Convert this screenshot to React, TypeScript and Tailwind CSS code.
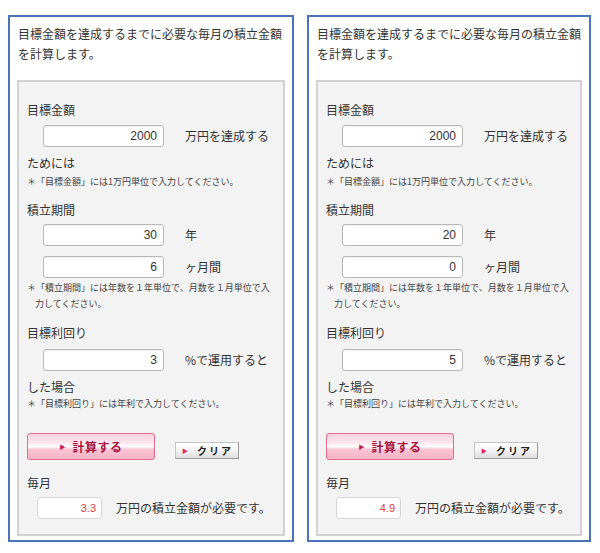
import React from "react";

const jp = { fontFamily: '"Noto Sans CJK JP", "Noto Sans", sans-serif' };
const num = { fontFamily: '"Liberation Sans", Arial, sans-serif' };

function Field({ value, unit }: { value: string; unit: string }) {
  return (
    <div className="flex items-center h-[22px] ml-4">
      <div
        className="w-[121px] h-[22px] bg-white border border-[#b8b8b8] rounded-[3px] flex items-center justify-end pr-[6px] text-[12px] text-[#333] shadow-[inset_0_1px_1px_rgba(0,0,0,0.06)]"
        style={num}
      >
        {value}
      </div>
      <div className="ml-[21px] text-[12px] leading-[20px] text-[#333]">{unit}</div>
    </div>
  );
}

function Panel({
  goal,
  years,
  months,
  rate,
  result,
  width,
}: {
  goal: string;
  years: string;
  months: string;
  rate: string;
  result: string;
  width: string;
}) {
  return (
    <div className={`${width} border-2 border-[#4b73b7] bg-white pt-[7px] pb-[4px]`}>
      <div className="pl-[8px] text-[12px] leading-[20px] text-[#333]">
        <div>目標金額を達成するまでに必要な毎月の積立金額</div>
        <div>を計算します。</div>
      </div>
      <div className="mt-[16px] mx-[7px] border-2 border-[#d3d3d3] bg-[#f3f3f3] pt-[18px] pl-[8px] pb-[15px] text-[#333]">
        <div className="text-[12px] leading-[20px]">目標金額</div>
        <div className="mt-[5px]">
          <Field value={goal} unit="万円を達成する" />
        </div>
        <div className="mt-[6px] text-[12px] leading-[20px]">ためには</div>
        <div className="mt-[2px] text-[9px] leading-[14px] text-[#444]">
          ＊「目標金額」には1万円単位で入力してください。
        </div>

        <div className="mt-[11px] text-[12px] leading-[20px]">積立期間</div>
        <div className="mt-[4px]">
          <Field value={years} unit="年" />
        </div>
        <div className="mt-[10px]">
          <Field value={months} unit="ヶ月間" />
        </div>
        <div className="mt-[2px] text-[9px] leading-[16px] text-[#444]">
          <div>＊「積立期間」には年数を１年単位で、月数を１月単位で入</div>
          <div className="pl-[8px]">力してください。</div>
        </div>

        <div className="mt-[11px] text-[12px] leading-[20px]">目標利回り</div>
        <div className="mt-[6px]">
          <Field value={rate} unit="%で運用すると" />
        </div>
        <div className="mt-[6px] text-[12px] leading-[20px]">した場合</div>
        <div className="text-[9px] leading-[14px] text-[#444]">
          ＊「目標利回り」には年利で入力してください。
        </div>

        <div className="mt-[22px] flex items-end">
          <div className="w-[128px] h-[27px] rounded-[3px] border border-[#e26a8a] bg-[linear-gradient(to_bottom,#fbd3df_0%,#fde6ed_35%,#ffffff_50%,#f9c4d3_62%,#f6b3c6_100%)] flex items-center justify-center">
            <span className="text-[6px] text-[#c8174f] mr-[7px]">▶</span>
            <span className="text-[12px] font-bold text-[#a8123f] tracking-[0.5px]">計算する</span>
          </div>
          <div className="ml-[20px] mb-[1px] w-[64px] h-[17px] border border-[#c4c4c4] border-r-[#9a9a9a] border-b-[#9a9a9a] bg-[linear-gradient(to_bottom,#ffffff_0%,#f3f3f3_50%,#dedede_100%)] flex items-center pl-[6px]">
            <span className="text-[6px] text-[#e0245a] mr-[9px]">▶</span>
            <span className="text-[10px] font-bold text-[#222] tracking-[2px]">クリア</span>
          </div>
        </div>

        <div className="mt-[13px] text-[12px] leading-[20px]">毎月</div>
        <div className="mt-[4px] flex items-center ml-[10px]">
          <div
            className="w-[65px] h-[22px] bg-white border border-[#d6d6d6] rounded-[3px] flex items-center justify-end pr-[5px] text-[11px] text-[#e0403c]"
            style={num}
          >
            {result}
          </div>
          <div className="ml-[14px] text-[12px] leading-[20px]">万円の積立金額が必要です。</div>
        </div>
      </div>
    </div>
  );
}

export default function App() {
  return (
    <div className="w-[600px] h-[553px] bg-white pt-[15px] pl-[8px] flex items-start gap-[13px]" style={jp}>
      <Panel goal="2000" years="30" months="6" rate="3" result="3.3" width="w-[286px]" />
      <Panel goal="2000" years="20" months="0" rate="5" result="4.9" width="w-[284px]" />
    </div>
  );
}
